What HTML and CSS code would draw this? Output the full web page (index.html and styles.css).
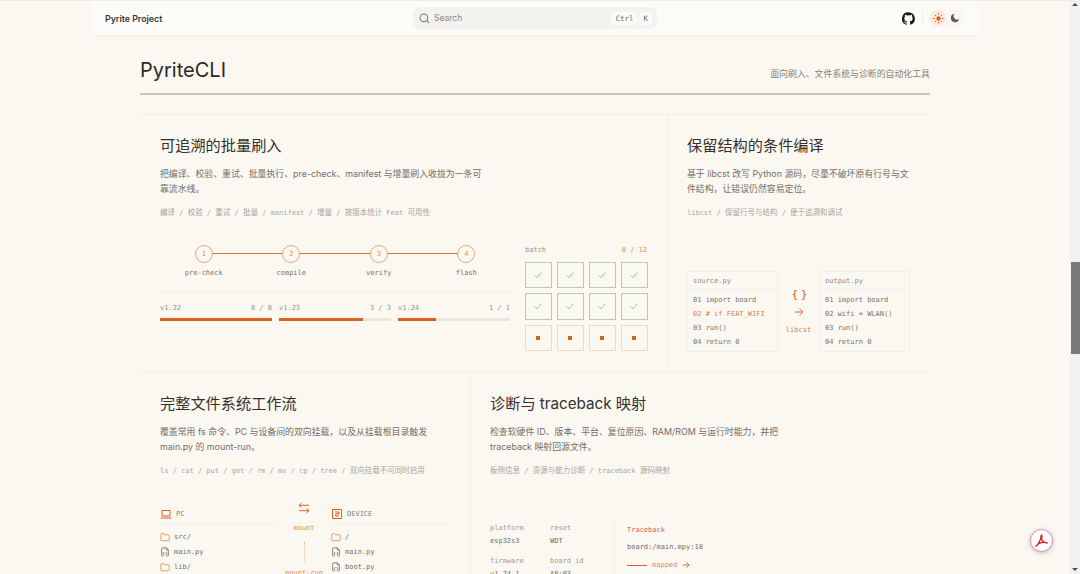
FILE: index.html
```html
<!DOCTYPE html>
<html lang="en">
<head>
    <meta charset="UTF-8">
    <meta name="viewport" content="width=device-width, initial-scale=1.0">
    <title>PyriteCLI</title>
    <link rel="stylesheet" href="styles.css">
</head>
<body>
    <svg class="defs" width="0" height="0">
        <symbol id="i-check" viewBox="0 0 12 12"><path d="M2 6.500 4.800 9.200 10 3" fill="none" stroke="currentColor" stroke-width="1"/></symbol>
        <symbol id="i-folder" viewBox="0 0 12 12"><path d="M1 3a1 1 0 0 1 1-1h2.600l1 1.300H10a1 1 0 0 1 1 1V9.500a1 1 0 0 1-1 1H2a1 1 0 0 1-1-1z" fill="none" stroke="currentColor" stroke-width="1"/></symbol>
        <symbol id="i-file" viewBox="0 0 12 12"><path d="M4 11H3a1 1 0 0 1-1-1V2a1 1 0 0 1 1-1h4.500L10 3.500V10a1 1 0 0 1-1 1H8M7.500 1v2.500H10M5 6 3.800 8 5 10M7 6l1.200 2L7 10" fill="none" stroke="currentColor" stroke-width="1"/></symbol>
    </svg>

    <div class="page">
        <header class="nav">
            <div class="brand">Pyrite Project</div>
            <div class="search">
                <svg width="11" height="11" viewBox="0 0 12 12"><circle cx="5.300" cy="5.300" r="4.200" fill="none" stroke="#77736c" stroke-width="1.100"/><path d="M8.400 8.400 11 11" stroke="#77736c" stroke-width="1.100"/></svg>
                <span class="search-text">Search</span>
                <span class="keys"><kbd>Ctrl</kbd><kbd>K</kbd></span>
            </div>
            <div class="nav-right">
                <svg class="github" width="13" height="13" viewBox="0 0 16 16"><path fill="#1c1b19" d="M8 .2a8 8 0 0 0-2.500 15.600c.4.1.5-.2.500-.4v-1.400c-2.200.5-2.700-1-2.700-1-.4-.9-.9-1.200-.9-1.200-.7-.5.100-.5.100-.5.800.1 1.200.8 1.200.8.700 1.200 1.900.9 2.300.7.100-.5.300-.9.500-1.100-1.800-.2-3.600-.9-3.600-4 0-.9.300-1.600.8-2.100-.1-.2-.4-1 .1-2.100 0 0 .7-.2 2.200.8a7.600 7.600 0 0 1 4 0c1.500-1 2.200-.8 2.200-.8.400 1.100.2 1.900.1 2.100.5.600.8 1.300.8 2.100 0 3.100-1.900 3.700-3.700 3.900.3.300.6.800.6 1.500v2.200c0 .2.100.5.600.4A8 8 0 0 0 8 .2z"/></svg>
                <span class="nav-sep"></span>
                <div class="theme">
                    <span class="theme-btn on">
                        <svg width="11" height="11" viewBox="0 0 12 12"><circle cx="6" cy="6" r="2.400" fill="#d9601f"/><path d="M6 .5v1.700M6 9.800v1.700M.5 6h1.700M9.800 6h1.700M2.100 2.100l1.200 1.200M8.700 8.700l1.200 1.200M2.100 9.900l1.200-1.200M8.700 3.300l1.200-1.200" stroke="#d9601f" stroke-width="1"/></svg>
                    </span>
                    <span class="theme-btn">
                        <svg width="10" height="10" viewBox="0 0 12 12"><path fill="#5d5a55" d="M5.500 1A5 5 0 1 0 11 6.800 4 4 0 0 1 5.500 1z"/></svg>
                    </span>
                </div>
            </div>
        </header>

        <main class="content">
            <div class="heading">
                <h1>PyriteCLI</h1>
                <p>面向刷入、文件系统与诊断的自动化工具</p>
            </div>

            <section class="row row-a">
                <article class="cell">
                    <h2>可追溯的批量刷入</h2>
                    <p class="desc">把编译、校验、重试、批量执行、pre-check、manifest 与增量刷入收拢为一条可靠流水线。</p>
                    <p class="tags"><span>编译</span> / <span>校验</span> / <span>重试</span> / <span>批量</span> / manifest / <span>增量</span> / <span>按版本统计</span> Feat <span>可用性</span></p>
                    <div class="flash-demo">
                        <div class="pipeline">
                            <div class="steps">
                                <div class="step"><span class="dot">1</span><span class="step-name">pre-check</span></div>
                                <div class="step"><span class="dot">2</span><span class="step-name">compile</span></div>
                                <div class="step"><span class="dot">3</span><span class="step-name">verify</span></div>
                                <div class="step"><span class="dot">4</span><span class="step-name">flash</span></div>
                            </div>
                            <div class="versions">
                                <div class="version"><div class="version-top"><span>v1.22</span><span>8 / 8</span></div><div class="bar"><i style="width:100%"></i></div></div>
                                <div class="version"><div class="version-top"><span>v1.23</span><span>3 / 3</span></div><div class="bar"><i style="width:75%"></i></div></div>
                                <div class="version"><div class="version-top"><span>v1.24</span><span>1 / 1</span></div><div class="bar"><i style="width:34%"></i></div></div>
                            </div>
                        </div>
                        <div class="batch">
                            <div class="batch-top"><span>batch</span><span class="accent">8 / 12</span></div>
                            <div class="batch-grid">
                                <span class="chip ok"><svg width="10" height="10"><use href="#i-check"/></svg></span>
                                <span class="chip ok"><svg width="10" height="10"><use href="#i-check"/></svg></span>
                                <span class="chip ok"><svg width="10" height="10"><use href="#i-check"/></svg></span>
                                <span class="chip ok"><svg width="10" height="10"><use href="#i-check"/></svg></span>
                                <span class="chip ok"><svg width="10" height="10"><use href="#i-check"/></svg></span>
                                <span class="chip ok"><svg width="10" height="10"><use href="#i-check"/></svg></span>
                                <span class="chip ok"><svg width="10" height="10"><use href="#i-check"/></svg></span>
                                <span class="chip ok"><svg width="10" height="10"><use href="#i-check"/></svg></span>
                                <span class="chip wait"><b></b></span>
                                <span class="chip wait"><b></b></span>
                                <span class="chip wait"><b></b></span>
                                <span class="chip wait"><b></b></span>
                            </div>
                        </div>
                    </div>
                </article>

                <article class="cell">
                    <h2>保留结构的条件编译</h2>
                    <p class="desc">基于 libcst 改写 Python 源码，尽量不破坏原有行号与文件结构，让错误仍然容易定位。</p>
                    <p class="tags">libcst / <span>保留行号与结构</span> / <span>便于追溯和调试</span></p>
                    <div class="code-demo">
                        <div class="code-box">
                            <div class="code-name">source.py</div>
                            <div class="code-lines">
                                <div>01 import board</div>
                                <div class="code-hit">02 # if FEAT_WIFI</div>
                                <div>03 run()</div>
                                <div>04 return 0</div>
                            </div>
                        </div>
                        <div class="code-mid">
                            <span class="braces">{ }</span>
                            <svg width="10" height="10" viewBox="0 0 12 12"><path d="M1 6h9.500M6.500 2l4 4-4 4" fill="none" stroke="#d9601f" stroke-width="1.100"/></svg>
                            <span>libcst</span>
                        </div>
                        <div class="code-box">
                            <div class="code-name">output.py</div>
                            <div class="code-lines">
                                <div>01 import board</div>
                                <div>02 wifi = WLAN()</div>
                                <div>03 run()</div>
                                <div>04 return 0</div>
                            </div>
                        </div>
                    </div>
                </article>
            </section>

            <section class="row row-b">
                <article class="cell">
                    <h2>完整文件系统工作流</h2>
                    <p class="desc">覆盖常用 fs 命令、PC 与设备间的双向挂载，以及从挂载根目录触发 main.py 的 mount-run。</p>
                    <p class="tags">ls / cat / put / get / rm / mv / cp / tree / <span>双向挂载不可同时启用</span></p>
                    <div class="fs-demo">
                        <div class="fs-col">
                            <div class="fs-head">
                                <svg width="12" height="12" viewBox="0 0 12 12"><path d="M2 2.500h8v5.500H2zM.5 10h11" fill="none" stroke="#d9601f" stroke-width="1"/></svg>
                                <span>PC</span>
                            </div>
                            <div class="fs-item"><svg class="orange" width="10" height="10"><use href="#i-folder"/></svg>src/</div>
                            <div class="fs-item"><svg width="10" height="10"><use href="#i-file"/></svg>main.py</div>
                            <div class="fs-item"><svg class="orange" width="10" height="10"><use href="#i-folder"/></svg>lib/</div>
                        </div>
                        <div class="fs-mid">
                            <svg width="12" height="12" viewBox="0 0 12 12"><path d="M3.500 1 1 3.300l2.500 2.300M1 3.300h10M8.500 6.400 11 8.700 8.500 11M11 8.700H1" fill="none" stroke="#d9601f" stroke-width="1"/></svg>
                            <span>mount</span>
                            <i class="fs-line"></i>
                            <span class="fs-run">mount-run</span>
                        </div>
                        <div class="fs-col">
                            <div class="fs-head">
                                <svg width="12" height="12" viewBox="0 0 12 12"><path d="M1.500 1.500h9v9h-9zM4 4h4v1.800H4.800V8H8" fill="none" stroke="#d9601f" stroke-width="1"/></svg>
                                <span>DEVICE</span>
                            </div>
                            <div class="fs-item"><svg class="orange" width="10" height="10"><use href="#i-folder"/></svg>/</div>
                            <div class="fs-item"><svg width="10" height="10"><use href="#i-file"/></svg>main.py</div>
                            <div class="fs-item"><svg width="10" height="10"><use href="#i-file"/></svg>boot.py</div>
                        </div>
                    </div>
                </article>

                <article class="cell">
                    <h2>诊断与 traceback 映射</h2>
                    <p class="desc">检查软硬件 ID、版本、平台、复位原因、RAM/ROM 与运行时能力，并把 traceback 映射回源文件。</p>
                    <p class="tags"><span>板侧信息</span> / <span>资源与能力诊断</span> / traceback <span>源码映射</span></p>
                    <div class="diag-demo">
                        <div class="diag-info">
                            <div><span>platform</span><b>esp32s3</b></div>
                            <div><span>reset</span><b>WDT</b></div>
                            <div><span>firmware</span><b>v1.24.1</b></div>
                            <div><span>board id</span><b>A8:03</b></div>
                        </div>
                        <div class="trace">
                            <div class="trace-name">Traceback</div>
                            <div class="trace-file">board:/main.mpy:18</div>
                            <div class="trace-map">
                                <i></i><span>mapped</span>
                                <svg width="8" height="8" viewBox="0 0 12 12"><path d="M1 6h9.500M6.500 2l4 4-4 4" fill="none" stroke="#d9601f" stroke-width="1.300"/></svg>
                            </div>
                        </div>
                    </div>
                </article>
            </section>
        </main>
    </div>

    <div class="scrollbar">
        <span class="arrow-up"></span>
        <span class="thumb"></span>
        <span class="arrow-down"></span>
    </div>

    <button class="pdf">
        <svg width="15" height="15" viewBox="0 0 24 24"><path d="M3 21c2.500-1 5.500-6 7.500-11.500C11.500 6.500 11 3 12 3s1 3.500 0 6.500c1.500 4 4 6 9 6.500-4-1.500-10-.5-13.500 1C6 18.500 4 20.500 3 21z" fill="none" stroke="#d3232a" stroke-width="2.200" stroke-linejoin="round"/></svg>
    </button>
</body>
</html>
```

FILE: styles.css
```css
* {
    box-sizing: border-box;
}

html, body {
    margin: 0;
    height: 100%;
    overflow: hidden;
}

body {
    display: flex;
    font-family: Inter, "Noto Sans CJK SC", sans-serif;
    background: #fbf8f2;
    color: #2b2926;
}

.defs {
    position: absolute;
}

.page {
    flex: 1;
    min-width: 0;
    border-top: 1px solid #ececea;
}

/* top bar */
.nav {
    height: 35px;
    margin: 0 92px;
    padding: 0 12px 0 13px;
    display: flex;
    align-items: center;
    position: relative;
    background: #fcfbf8;
    border-bottom: 1px solid #f1efe9;
}

.brand {
    font-size: 8.800px;
    font-weight: 600;
    color: #3a3835;
}

.search {
    position: absolute;
    left: 321px;
    top: 6px;
    width: 244px;
    height: 22px;
    padding: 0 5px 0 6px;
    display: flex;
    align-items: center;
    gap: 4px;
    border-radius: 7px;
    background: #f3f2ef;
    color: #8d8a84;
    font-size: 8.500px;
}

.keys {
    margin-left: auto;
    display: flex;
    gap: 2px;
}

kbd {
    padding: 2px 4px;
    border-radius: 4px;
    background: #fbfaf8;
    color: #6e6b66;
    font: 7.500px "DejaVu Sans Mono", monospace;
}

.nav-right {
    margin-left: auto;
    display: flex;
    align-items: center;
}

.nav-sep {
    width: 1px;
    height: 14px;
    margin: 0 5px 0 7px;
    background: #f0eee9;
}

.theme {
    display: flex;
    align-items: center;
    gap: 1px;
    width: 38px;
    height: 20px;
    padding: 0 2px;
    border-radius: 10px;
    background: #faf8f5;
}

.theme-btn {
    width: 16px;
    height: 16px;
    border-radius: 50%;
    display: flex;
    align-items: center;
    justify-content: center;
}

.theme-btn.on {
    background: #fbe9dd;
}

/* heading */
.content {
    padding: 0 140px;
}

.heading {
    height: 59px;
    padding-top: 21px;
    display: flex;
    justify-content: space-between;
    border-bottom: 2px solid #c9c5bc;
}

h1 {
    margin: 0;
    font-size: 20px;
    font-weight: 400;
    line-height: 26px;
    color: #2b2926;
}

.heading p {
    margin: 10px 0 0;
    font-size: 8.900px;
    line-height: 14px;
    color: #85817a;
}

/* feature grid */
.row {
    display: grid;
}

.row-a {
    margin-top: 19px;
    height: 258px;
    grid-template-columns: 527px 263px;
    border-top: 1px solid #f1eee8;
    border-bottom: 1px solid #f1eee8;
}

.row-b {
    grid-template-columns: 330px 460px;
}

.cell {
    padding: 21px 20px 0;
    min-width: 0;
}

.row-b .cell {
    padding-top: 22px;
    height: 202px;
    overflow: hidden;
}

.cell + .cell {
    padding-left: 19px;
    border-left: 1px solid #f1eee8;
}

h2 {
    margin: 0;
    font-size: 15.200px;
    font-weight: 400;
    line-height: 20px;
    color: #33312d;
}

.desc {
    max-width: 325px;
    margin: 9.500px 0 0;
    font-size: 8.880px;
    line-height: 15.500px;
    color: #726e67;
}

.tags {
    margin: 10px 0 0;
    font: 7px/12px "DejaVu Sans Mono", "Noto Sans CJK SC", monospace;
    color: #a9a59d;
}

.tags span {
    font-size: 7.500px;
}

.accent {
    color: #d9601f;
}

/* pipeline */
.flash-demo {
    margin-top: 26px;
    display: flex;
    gap: 15px;
}

.pipeline {
    width: 350px;
}

.steps {
    display: grid;
    grid-template-columns: repeat(4, 1fr);
    padding-bottom: 14px;
    border-bottom: 1px solid #f1eee8;
}

.step {
    position: relative;
    display: flex;
    flex-direction: column;
    align-items: center;
    gap: 5px;
}

.step + .step::before {
    content: "";
    position: absolute;
    top: 8px;
    right: 50%;
    width: 100%;
    height: 1px;
    background: #dd6f30;
}

.dot {
    position: relative;
    z-index: 1;
    width: 18px;
    height: 18px;
    border: 1px solid #eba67f;
    border-radius: 50%;
    background: #fbf8f2;
    text-align: center;
    font: 7px/16px "DejaVu Sans Mono", monospace;
    color: #e08b5a;
}

.step-name {
    font: 7px/10px "DejaVu Sans Mono", monospace;
    color: #77736c;
}

.versions {
    margin-top: 10px;
    display: grid;
    grid-template-columns: repeat(3, 112px);
    gap: 7px;
}

.version-top {
    display: flex;
    justify-content: space-between;
    font: 7px/10px "DejaVu Sans Mono", monospace;
    color: #96928a;
}

.bar {
    margin-top: 5px;
    height: 3px;
    background: #e9e6dc;
}

.bar i {
    display: block;
    height: 100%;
    background: #d9601f;
}

/* batch */
.batch {
    width: 122px;
}

.batch-top {
    display: flex;
    justify-content: space-between;
    font: 7px/10px "DejaVu Sans Mono", monospace;
    color: #96928a;
}

.batch-top .accent {
    color: #e08b5a;
}

.batch-grid {
    margin-top: 7px;
    display: grid;
    grid-template-columns: repeat(4, 26.500px);
    grid-auto-rows: 26.500px;
    gap: 5px 5.500px;
}

.chip {
    display: flex;
    align-items: center;
    justify-content: center;
    border: 1px solid;
}

.chip.ok {
    border-color: #b3cdbb;
    color: #8fae9b;
}

.chip.wait {
    border-color: #f3d6c5;
}

.chip b {
    width: 4px;
    height: 4px;
    background: #d9601f;
}

/* code panels */
.code-demo {
    margin-top: 52px;
    display: grid;
    grid-template-columns: 91px 41px 91px;
    font: 7px/14px "DejaVu Sans Mono", monospace;
    color: #77736c;
}

.code-box {
    height: 81px;
    border: 1px solid #f3f0ea;
}

.code-name {
    height: 18px;
    padding: 2px 5px;
    color: #8d8982;
    border-bottom: 1px solid #f3f0ea;
}

.code-lines {
    padding: 3px 5px;
}

.code-hit {
    color: #e07b40;
}

.code-mid {
    padding-top: 3px;
    display: flex;
    flex-direction: column;
    align-items: center;
    justify-content: center;
    gap: 6px;
    color: #e0803f;
}

.braces {
    font-size: 11px;
    line-height: 12px;
    letter-spacing: -2px;
    color: #d9601f;
}

/* file system */
.fs-demo {
    margin-top: 26px;
    display: grid;
    grid-template-columns: 117px 54px 117px;
    font: 7px/15px "DejaVu Sans Mono", monospace;
    color: #6f6b65;
}

.fs-head {
    height: 18px;
    margin-top: 3px;
    margin-bottom: 6px;
    display: flex;
    align-items: center;
    gap: 4px;
    color: #85817a;
    border-bottom: 1px solid #f3f0ea;
}

.fs-item {
    display: flex;
    align-items: center;
    gap: 4px;
    height: 15px;
}

.fs-item svg {
    color: #6f6b65;
}

.fs-item svg.orange {
    color: #e08b5a;
}

.fs-mid {
    display: flex;
    flex-direction: column;
    align-items: center;
    color: #e08b5a;
    line-height: 11px;
}

.fs-mid svg {
    margin-top: -1px;
}

.fs-mid span {
    margin-top: 9px;
    white-space: nowrap;
}

.fs-line {
    height: 20px;
    margin-top: 8px;
    border-left: 1px dotted #eeb596;
}

.fs-mid .fs-run {
    margin-top: 6px;
}

/* diagnostics */
.diag-demo {
    margin-top: 45px;
    display: flex;
    font: 7px/13px "DejaVu Sans Mono", monospace;
    color: #6f6b65;
}

.diag-info {
    width: 125px;
    display: grid;
    grid-template-columns: 60px 60px;
    grid-auto-rows: 33px;
    border-right: 1px solid #f1eee8;
}

.diag-info span {
    display: block;
    color: #a09c94;
}

.diag-info b {
    font-weight: 400;
}

.trace {
    padding: 2px 0 0 12px;
}

.trace-name {
    color: #cc5c4c;
}

.trace-file {
    margin-top: 4px;
}

.trace-map {
    margin-top: 5px;
    display: flex;
    align-items: center;
    gap: 5px;
    color: #e08b5a;
}

.trace-map i {
    width: 20px;
    height: 1px;
    background: #d9601f;
}

/* scrollbar */
.scrollbar {
    width: 10px;
    position: relative;
    background: #f1f1f1;
}

.thumb {
    position: absolute;
    top: 262px;
    left: 1px;
    right: 0;
    height: 92px;
    background: #787878;
}

.arrow-up, .arrow-down {
    position: absolute;
    left: 2px;
    border: 3px solid transparent;
}

.arrow-up {
    top: 3px;
    border-top: 0;
    border-bottom: 3px solid #505050;
}

.arrow-down {
    bottom: 3px;
    border-bottom: 0;
    border-top: 3px solid #505050;
}

/* floating pdf button */
.pdf {
    position: fixed;
    left: 1030px;
    top: 529px;
    width: 23px;
    height: 23px;
    padding: 0;
    display: flex;
    align-items: center;
    justify-content: center;
    border: 1px solid #e58fa8;
    border-radius: 50%;
    background: #fff;
    box-shadow: 0 1px 4px rgba(80, 60, 120, 0.3);
}
```
